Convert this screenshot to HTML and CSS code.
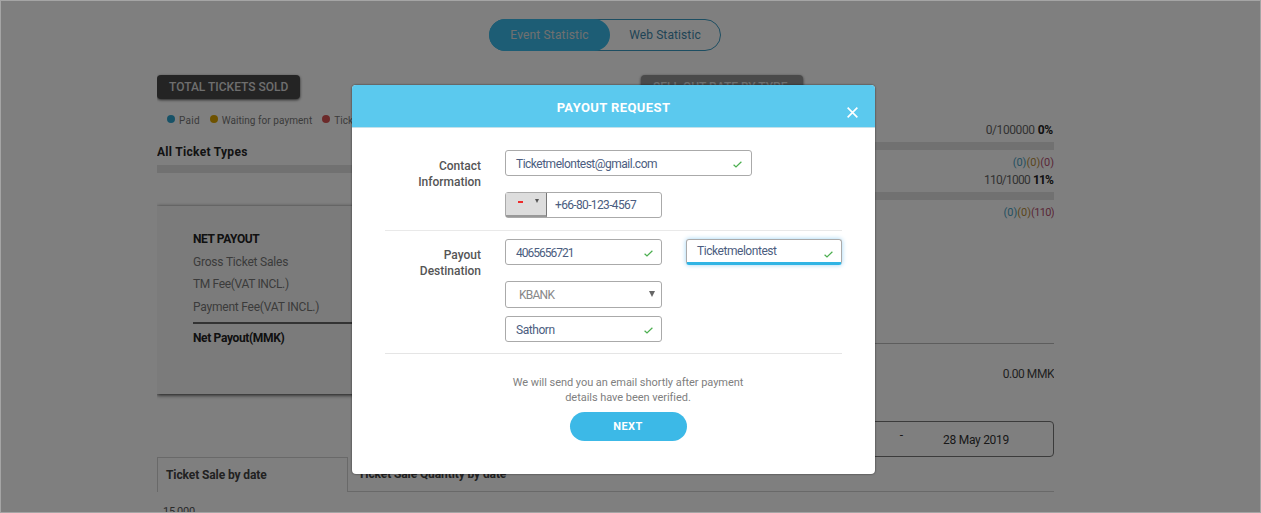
FILE: index.html
```html
<!DOCTYPE html>
<html lang="en">
<head>
<meta charset="utf-8">
<title>Payout Request</title>
<link rel="stylesheet" href="styles.css">
</head>
<body>
<div class="frame">
  <main class="page">
    <nav class="switch">
      <a class="switch-item active"><span class="t-event">Event Statistic</span></a>
      <a class="switch-item"><span class="t-web">Web Statistic</span></a>
    </nav>
    <div class="columns">
      <section class="left">
        <h2 class="badge">TOTAL TICKETS SOLD</h2>
        <div class="legend">
          <i class="dot paid"></i><span class="lg-paid">Paid</span>
          <i class="dot waiting"></i><span class="lg-wait">Waiting for payment</span>
          <i class="dot left-over"></i><span>Tickets left</span>
        </div>
        <h3 class="types">All Ticket Types</h3>
        <div class="bar"></div>
        <div class="card">
          <h3 class="card-title">NET PAYOUT</h3>
          <p class="c-gross">Gross Ticket Sales</p>
          <p class="c-tm">TM Fee(VAT INCL.)</p>
          <p class="c-pay">Payment Fee(VAT INCL.)</p>
          <h3 class="total">Net Payout(MMK)</h3>
        </div>
      </section>
      <section class="right">
        <h2 class="badge grey">SELL OUT RATE BY TYPE</h2>
        <div class="rate first"><span>0/100000</span> <b>0%</b></div>
        <div class="bar"></div>
        <div class="split"><span class="blue">(0)</span><span class="gold">(0)</span><span class="red">(0)</span></div>
        <div class="rate second"><span>110/1000</span> <b>11%</b></div>
        <div class="bar"></div>
        <div class="split last"><span class="blue">(0)</span><span class="gold">(0)</span><span class="red">(110)</span></div>
        <div class="amount">0.00 MMK</div>
        <div class="dates"><span class="dash">-</span><span class="date">28 May 2019</span></div>
      </section>
    </div>
    <div class="tabs">
      <div class="tab current"><span class="t-tab1">Ticket Sale by date</span></div>
      <div class="tab"><span class="t-tab2">Ticket Sale Quantity by date</span></div>
    </div>
    <div class="axis">15,000</div>
  </main>
  <div class="overlay">
    <div class="modal">
      <header class="modal-head">
        <h1>PAYOUT REQUEST</h1>
        <svg class="close" viewBox="0 0 12 12"><path d="M.7.7l10.6 10.6M11.3.7L.7 11.3"/></svg>
      </header>
      <div class="modal-body">
        <div class="group contact">
          <div class="label">Contact<br>Information</div>
          <div class="fields">
            <div class="input wide"><span class="v-mail">Ticketmelontest@gmail.com</span><svg class="check" viewBox="0 0 9 7"><path d="M.6 3.7L3 6 8.4.7"/></svg></div>
            <div class="input phone">
              <div class="country"><i class="flag"></i><i class="caret"></i></div>
              <span class="v-phone">+66-80-123-4567</span>
            </div>
          </div>
        </div>
        <div class="group payout">
          <div class="label">Payout<br>Destination</div>
          <div class="fields">
            <div class="input"><span class="v-acc">4065656721</span><svg class="check" viewBox="0 0 9 7"><path d="M.6 3.7L3 6 8.4.7"/></svg></div>
            <div class="input select"><span class="v-bank">KBANK</span><i class="arrow"></i></div>
            <div class="input"><span class="v-branch">Sathorn</span><svg class="check" viewBox="0 0 9 7"><path d="M.6 3.7L3 6 8.4.7"/></svg></div>
          </div>
          <div class="input focus"><span class="v-name">Ticketmelontest</span><svg class="check" viewBox="0 0 9 7"><path d="M.6 3.7L3 6 8.4.7"/></svg></div>
        </div>
        <footer class="foot">
          <p>We will send you an email shortly after payment<br>details have been verified.</p>
          <button class="next">NEXT</button>
        </footer>
      </div>
    </div>
  </div>
</div>
</body>
</html>
```
FILE: styles.css
```css
* { box-sizing: border-box; margin: 0; padding: 0; }
body { font-family: Roboto, "Liberation Sans", sans-serif; font-size: 12px; overflow: hidden; }
h1, h2, h3 { font-weight: 500; }
p, span, h1, h2, h3, .rate, .amount { white-space: nowrap; }

.frame { position: relative; width: 1261px; height: 513px; border: 1px solid #a5a5a5; overflow: hidden; }
.page { width: 897px; height: 511px; margin-left: 156px; padding-top: 18px; color: #666; overflow: hidden; }

.switch { display: flex; width: 232px; height: 32px; margin-left: 332px; border: 1px solid #3b9cc4; border-radius: 16px; }
.switch-item { flex: 1; line-height: 31px; text-align: center; color: #3e89ac; letter-spacing: .1px; }
.switch-item.active { flex: 0 0 121px; margin: -1px 0 -1px -1px; line-height: 33px; border-radius: 16px; background: #3abbea; color: #e0e0e0; letter-spacing: .15px; }

.columns { display: flex; gap: 71px; height: 406px; padding-top: 24px; }
.left, .right { width: 413px; }
.badge { width: 143px; height: 24px; line-height: 25px; padding-left: 12px; border-radius: 4px; background: #484848; color: #ddd; font-size: 12px; letter-spacing: 0; box-shadow: 0 1px 3px rgba(0,0,0,.7); }
.badge.grey { width: 162px; background: #959595; }

.legend { display: flex; align-items: center; height: 14px; margin-top: 14px; padding-left: 10px; font-size: 10px; letter-spacing: .05px; color: #777; }
.legend span { line-height: 16px; padding-top: 2px; }
.lg-paid { letter-spacing: .25px; }
.dot { width: 8px; height: 8px; border-radius: 50%; margin-right: 4px; margin-top: -2px; }
.paid { background: #2fa5cf; }
.waiting { background: #dda500; margin-left: 10px; }
.left-over { background: #d85454; margin-left: 10px; }
.types { height: 18px; line-height: 17px; margin-top: 17px; font-size: 12px; font-weight: 700; letter-spacing: .3px; color: #262626; }
.bar { height: 8px; background: #e2e2e2; }
.left .bar { margin-top: 3px; }

.card { width: 413px; height: 188px; margin-top: 33px; padding: 22px 36px 0; background: #f6f6f6; box-shadow: 0 1px 4px rgba(0,0,0,.85); line-height: 22.7px; color: #777; }
.card-title, .total { font-size: 12px; font-weight: 700; color: #222; letter-spacing: -.35px; }
.card-title { letter-spacing: -.4px; }
.c-gross { letter-spacing: -.2px; }
.c-tm { letter-spacing: -.35px; }
.c-pay { letter-spacing: -.22px; }
.total { margin-top: 3px; border-top: 2px solid #666; line-height: 28px; }

.rate { height: 16px; line-height: 16px; text-align: right; padding-right: 1px; }
.rate b { color: #222; }
.first span { letter-spacing: -.4px; }
.first b { letter-spacing: -.2px; }
.second span { letter-spacing: -.75px; }
.second b { letter-spacing: -.9px; }
.rate.first { margin-top: 23px; }
.right .bar { margin-top: 4px; }
.split { height: 16px; line-height: 16px; margin-top: 5px; display: flex; justify-content: flex-end; font-size: 11px; }
.split + .rate { margin-top: 1px; }
.blue { color: #49a2c4; }
.gold { color: #b58c39; }
.red { color: #b45070; }
.last .red { letter-spacing: -.65px; }
.split.last { height: 139px; margin-top: 5px; border-bottom: 1px solid #bbb; }
.amount { height: 16px; line-height: 16px; margin-top: 22px; text-align: right; color: #444; letter-spacing: -.45px; }
.dates { display: flex; height: 36px; margin-top: 39px; border: 1px solid #777; border-radius: 4px; line-height: 36px; color: #333; justify-content: flex-end; }
.dash { line-height: 27px; margin-right: 40px; }
.date { margin-right: 44px; letter-spacing: -.28px; }

.tabs { display: flex; height: 35px; }
.tab { flex: 1; padding-left: 10px; line-height: 35px; border-bottom: 1px solid #d2d2d2; color: #444; font-weight: 700; letter-spacing: -.1px; }
.tab.current { flex: 0 0 191px; border: 1px solid #d2d2d2; border-bottom: 0; padding-left: 8px; }
.axis { margin: 13px 0 0 6px; font-size: 11px; line-height: 14px; color: #555; letter-spacing: -.2px; }

.overlay { position: absolute; inset: 0; background: rgba(0,0,0,.5); padding: 84px 0 0 351px; }
.modal { width: 523px; height: 389px; border-radius: 4px; background: #fff; box-shadow: 0 0 2px rgba(0,0,0,.7); overflow: hidden; }
.modal-head { position: relative; height: 43px; background: #5bc9ee; color: #fff; text-align: center; border-bottom: 1px solid #c3e1eb; }
.modal-head h1 { font-size: 13px; line-height: 45px; font-weight: 700; letter-spacing: .4px; }
.close { position: absolute; left: 495px; top: 22px; width: 11px; height: 11px; fill: none; stroke: #fff; stroke-width: 1.8; }
.modal-body { padding: 0 33px; }
.group { display: flex; border-bottom: 1px solid #e9e9e9; }
.contact { height: 103px; padding-top: 22px; }
.payout { height: 123px; padding-top: 8px; border-bottom: 1px solid #e5e5e5; }
.label { width: 96px; margin-right: 24px; padding-top: 9px; text-align: right; line-height: 15.5px; color: #555; font-weight: 500; }
.fields { width: 157px; }
.input { display: flex; align-items: center; justify-content: space-between; width: 157px; height: 26px; border: 1px solid #aaa; border-radius: 3px; padding: 1px 8px 0 10px; color: #4b5d80; font-size: 12px; }
.v-mail { letter-spacing: -.5px; }
.v-phone { letter-spacing: -.65px; }
.v-acc { letter-spacing: -1px; }
.v-bank { letter-spacing: -.75px; }
.v-branch { letter-spacing: -.45px; }
.v-name { letter-spacing: -.45px; margin-top: -1px; }
.input.wide { width: 247px; padding-right: 9px; }
.input.phone { margin-top: 16px; padding: 0; justify-content: flex-start; }
.country { display: flex; width: 41px; height: 24px; margin-right: 8px; background: #ddd; border-right: 1px solid #777; border-bottom: 2px solid #999; padding: 6px 7px 0 12px; justify-content: space-between; }
.flag { width: 5px; height: 2px; margin-top: 2px; background: #ee2b2b; }
.caret { height: 0; border: 2.5px solid transparent; border-top: 4px solid #555; border-bottom: 0; }
.check { width: 9px; height: 7px; margin-top: 2px; fill: none; stroke: #4caf50; stroke-width: 1.2; flex: none; }
.input.select { height: 27px; margin: 16px 0 8px; padding: 0 6px 0 13px; color: #888; }
.arrow { border: 3px solid transparent; border-top: 6px solid #666; border-bottom: 0; margin-top: -2px; }
.input.focus { margin-left: 24px; width: 156px; border-bottom: 3px solid #2fb4e4; box-shadow: 0 0 5px #9bd2f2; }
.focus .check { margin-top: 5px; }
.foot { padding: 22px 0 0 29px; text-align: center; color: #808080; font-size: 11px; line-height: 14.5px; letter-spacing: -.04px; }
.next { display: block; width: 117px; height: 29px; margin: 7px auto 0; border: 0; border-radius: 15px; background: #3cb9e7; color: #fff; font: 700 11px Roboto, sans-serif; letter-spacing: .5px; }
```
